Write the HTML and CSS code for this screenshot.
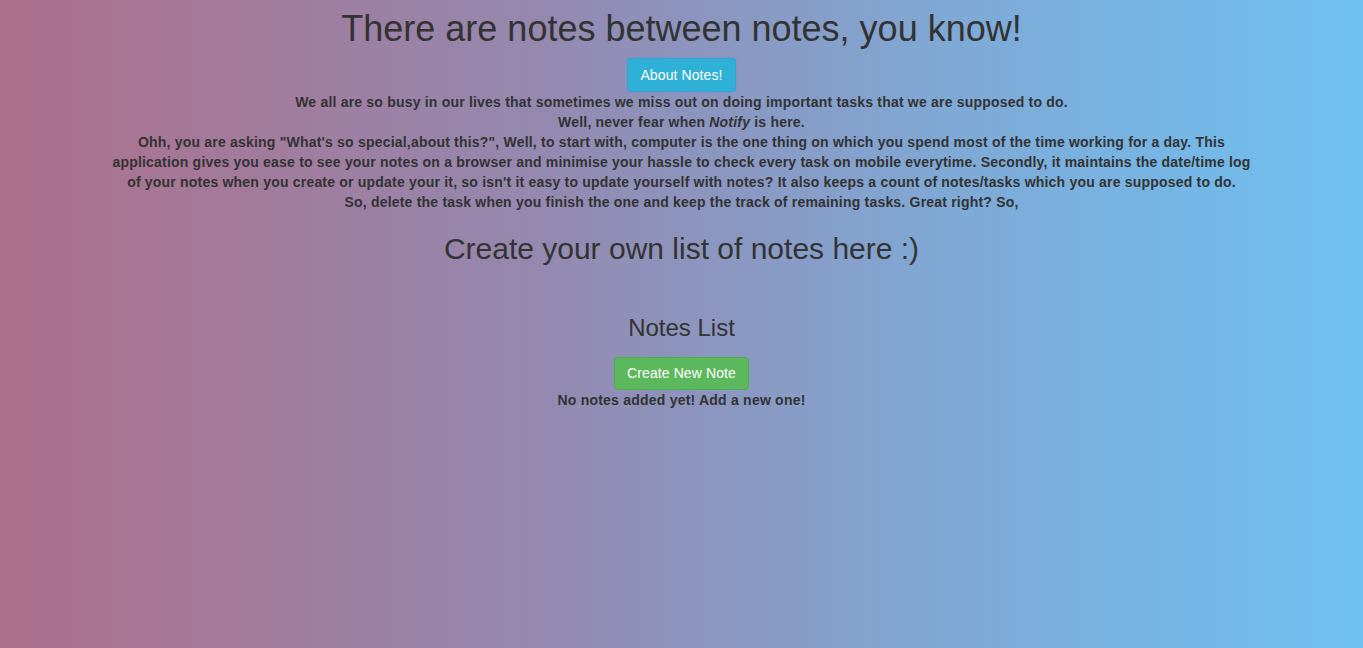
FILE: index.html
```html
<!DOCTYPE html>
<html lang="en">
<head>
<meta charset="utf-8">
<title>Notify</title>
<link rel="stylesheet" href="styles.css">
</head>
<body>
<div class="container">
  <h1 class="title">There are notes between notes, you know!</h1>
  <div class="btn-row">
    <button class="btn btn-info">About Notes!</button>
  </div>
  <p class="about">We all are so busy in our lives that sometimes we miss out on doing important tasks that we are supposed to do.<br>
  Well, never fear when <i>Notify</i> is here.<br>
  Ohh, you are asking "What's so special,about this?", Well, to start with, computer is the one thing on which you spend most of the time working for a day. This<br>
  application gives you ease to see your notes on a browser and minimise your hassle to check every task on mobile everytime. Secondly, it maintains the date/time log<br>
  of your notes when you create or update your it, so isn't it easy to update yourself with notes? It also keeps a count of notes/tasks which you are supposed to do.<br>
  So, delete the task when you finish the one and keep the track of remaining tasks. Great right? So,</p>
  <h2 class="subtitle">Create your own list of notes here :)</h2>
  <section class="notes">
    <h3 class="notes-title">Notes List</h3>
    <div class="btn-row">
      <button class="btn btn-success">Create New Note</button>
    </div>
    <p class="empty">No notes added yet! Add a new one!</p>
  </section>
</div>
</body>
</html>
```
FILE: styles.css
```css
html, body {
  margin: 0;
  padding: 0;
  height: 100%;
}
body {
  background: linear-gradient(to right, #ae6f8b 0%, #9489b0 40%, #7fa9d6 70%, #6ec1f1 100%);
  font-family: "Liberation Sans", Arial, Helvetica, sans-serif;
  font-size: 14px;
  line-height: 20px;
  color: #333;
}
.container {
  width: 1140px;
  margin: 0 auto;
  text-align: center;
}
.title {
  margin: 9px 0 9px;
  font-size: 36px;
  line-height: 1.1;
  font-weight: 500;
}
.btn-row {
  display: flex;
  justify-content: center;
}
.btn {
  font-family: inherit;
  font-size: 14px;
  line-height: 20px;
  padding: 6px 12px;
  border: 1px solid transparent;
  border-radius: 4px;
  color: #fff;
  letter-spacing: 0.1px;
  cursor: pointer;
}
.btn-info {
  background: #2eb0d7;
  border-color: #3a9fd6;
  box-shadow: 0 0 2px rgba(80, 140, 220, 0.6);
}
.btn-success {
  height: 33px;
  line-height: 19px;
  background: #5cb85c;
  border-color: #4cae4c;
}
.about {
  margin: 0;
  font-weight: bold;
  letter-spacing: 0.2px;
}
.subtitle {
  margin: 20px 0 10px;
  font-size: 30px;
  line-height: 1.1;
  font-weight: 500;
}
.notes {
  padding-top: 40px;
}
.notes-title {
  margin: 0 0 16px;
  font-size: 24px;
  line-height: 1.1;
  font-weight: 500;
}
.empty {
  margin: 0;
  font-weight: bold;
  letter-spacing: 0.22px;
}
```
